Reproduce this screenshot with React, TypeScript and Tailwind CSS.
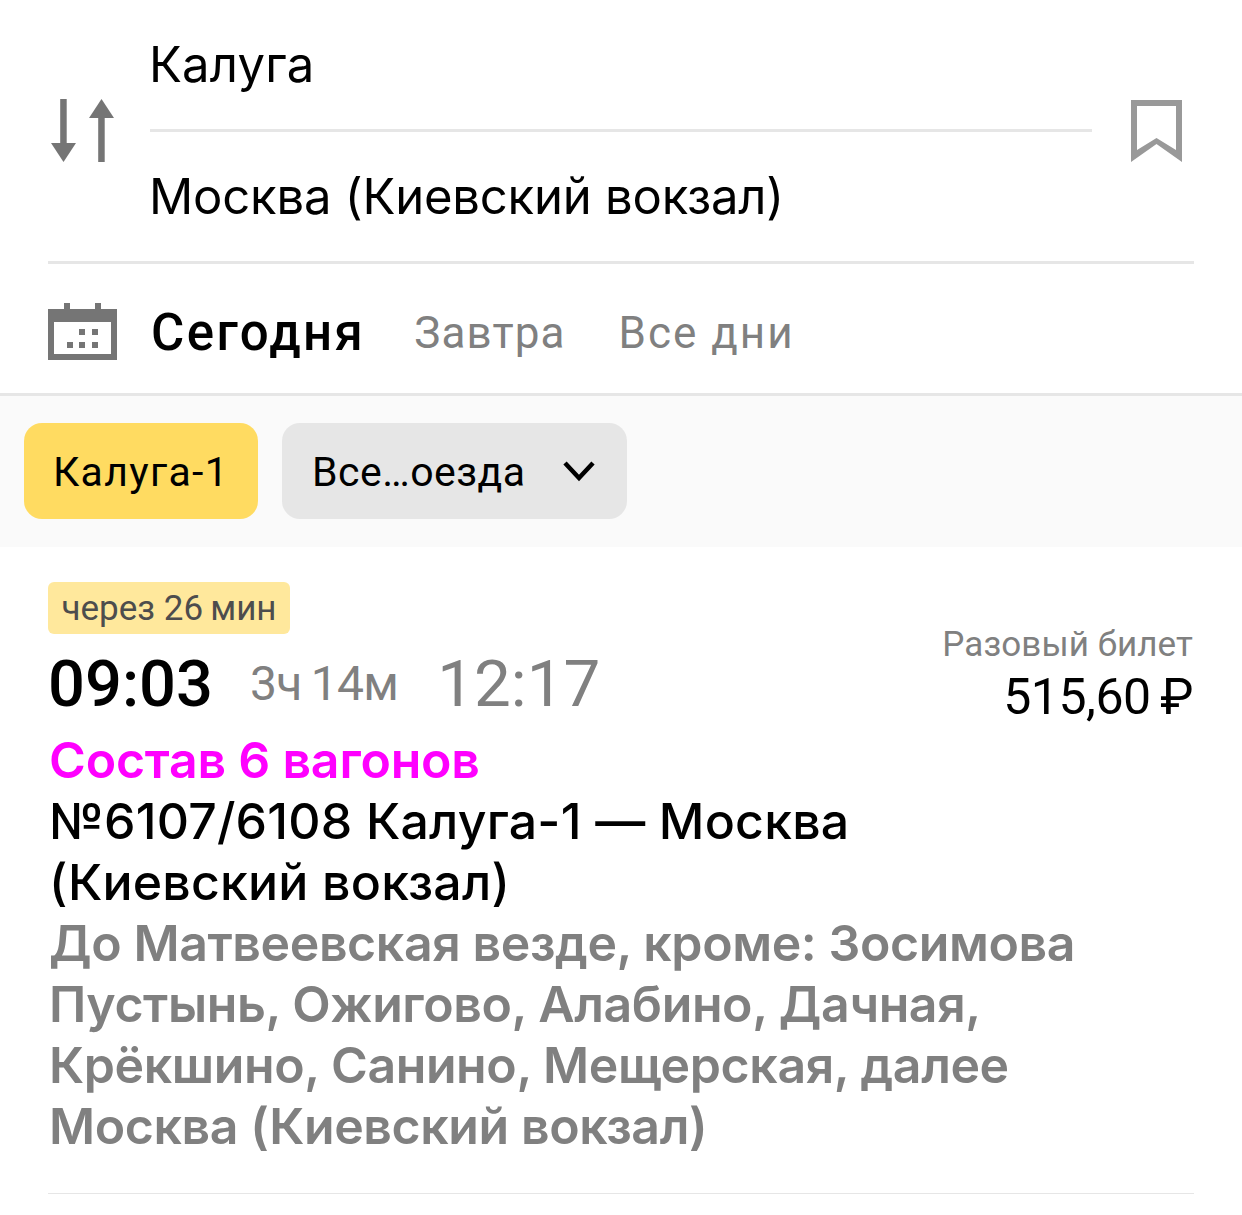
export default function App() {
  return (
    <div className="w-[1242px] h-[1215px] bg-white overflow-hidden font-['Roboto',sans-serif] text-black">
      <div className="mx-12 h-[264px] border-b-[3px] border-[#e6e6e6] flex items-center">
        <svg className="w-[66px] h-[64px] shrink-0" viewBox="0 0 66 64" fill="#757575">
          <rect x="12.200" y="0" width="6.500" height="45" />
          <path d="M3 44h25L15.500 63z" />
          <rect x="50.200" y="18" width="6.500" height="45" />
          <path d="M41 19h25L53.500 0z" />
        </svg>
        <div className="ml-[36px] w-[942px] shrink-0 flex flex-col font-['Inter',sans-serif]">
          <div className="h-[132px] border-b-[3px] border-[#e6e6e6] text-[49px] leading-[56px] pt-[37px]">
            <span className="-ml-px tracking-[0.2px]">Калуга</span>
          </div>
          <div className="h-[129px] text-[49px] leading-[56px] pt-[37px]">
            <span className="-ml-px tracking-[-0.2px]">Москва (Киевский вокзал)</span>
          </div>
        </div>
        <svg className="ml-[39px] w-[51px] h-[62px] shrink-0" viewBox="0 0 51 62" fill="#999999">
          <path fillRule="evenodd" d="M0 0h51v62L25.500 44 0 62zM6 6v44l19.500-12L45 50V6z" />
        </svg>
      </div>
      <div className="h-[129px] pl-12 flex items-center border-b-[3px] border-[#e6e6e6] box-content">
        <svg className="w-[69px] h-[57px] mt-[6px] shrink-0" viewBox="0 0 69 57" fill="#757575">
          <rect x="16" y="0" width="6" height="8" />
          <rect x="47" y="0" width="6" height="8" />
          <path fillRule="evenodd" d="M0 6h69v51H0zM6 19v32h57V19z" />
          <rect x="31" y="26" width="6" height="6" />
          <rect x="44" y="26" width="6" height="6" />
          <rect x="19" y="39" width="6" height="6" />
          <rect x="31" y="39" width="6" height="6" />
          <rect x="44" y="39" width="6" height="6" />
        </svg>
        <span className="ml-[34px] mt-[9px] text-[51px] font-medium tracking-[2.400px]">Сегодня</span>
        <span className="ml-[49px] mt-[8px] text-[44px] text-[#808080] tracking-[1.100px]">Завтра</span>
        <span className="ml-[53px] mt-[8px] text-[44px] text-[#808080] tracking-[2px]">Все дни</span>
      </div>
      <div className="h-[151px] bg-[#fafafa] pl-6 flex items-start gap-6 pt-[27px]">
        <div className="w-[234px] h-[96px] rounded-[18px] bg-[#ffdb61] flex items-center justify-center text-[41px] tracking-[1.300px] pt-[3px]">Калуга-1</div>
        <div className="w-[345px] h-[96px] rounded-[18px] bg-[#e6e6e6] flex items-center pl-[30px] text-[41px]">
          <span className="pt-[3px] tracking-[0.5px]">Все…оезда</span>
          <svg className="ml-[36px] w-[34px] h-[24px]" viewBox="0 0 34 24" fill="none" stroke="#000" strokeWidth="4.500">
            <path d="M3 4l14 15L31 4" />
          </svg>
        </div>
      </div>
      <div className="relative h-[647px] mx-12 border-b border-[#e6e6e6] pt-[35px]">
        <div className="w-[242px] h-[52px] rounded-[6px] bg-[#ffe89c] flex items-center justify-center text-[35px] text-[#4d4d4d] pt-[3px]">через 26&#8201;мин</div>
        <div className="flex items-center mt-[11px] h-[78px]">
          <span className="text-[65px] font-medium leading-[78px]">09:03</span>
          <span className="ml-[37px] text-[48px] text-[#808080] tracking-[-0.7px]">3ч&#8201;14м</span>
          <span className="ml-[39px] text-[65.500px] text-[#808080] leading-[78px]">12:17</span>
        </div>
        <div className="absolute right-0 top-[76px] text-right">
          <div className="text-[35px] leading-[44px] text-[#808080] tracking-[0.1px] pr-[1px]">Разовый билет</div>
          <div className="text-[50px] leading-[60px] tracking-[-0.5px] pr-[1px]">515,60&#8201;₽</div>
        </div>
        <div className="mt-[7px] pl-[1px] font-['Inter',sans-serif] text-[50px] leading-[61px] font-medium">
          <div className="text-[#ff00ff] font-semibold tracking-[-0.2px]">Состав 6 вагонов</div>
          <div className="w-[900px] tracking-[0.2px]">№6107/6108 Калуга-1 — Москва (Киевский вокзал)</div>
          <div className="text-[#808080] w-[1060px] font-semibold tracking-[-0.4px]">До Матвеевская везде, кроме: Зосимова Пустынь, Ожигово, Алабино, Дачная, Крёкшино, Санино, Мещерская, далее Москва (Киевский вокзал)</div>
        </div>
      </div>
    </div>
  );
}
